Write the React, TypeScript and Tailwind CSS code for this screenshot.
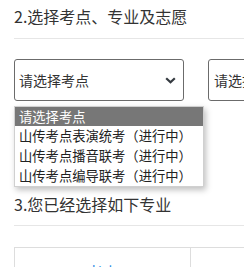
import React from 'react';

const options = ['山传考点表演统考（进行中）', '山传考点播音联考（进行中）', '山传考点编导联考（进行中）'];

function Chevron() {
    return (
        <svg width="11" height="7" viewBox="0 0 11 7" className="shrink-0">
            <path d="M1.2 1.2 L5.5 5.3 L9.8 1.2" fill="none" stroke="#343a40" strokeWidth="2.2" />
        </svg>
    );
}

export default function App() {
    return (
        <div
            className="relative w-[244px] h-[267px] overflow-hidden bg-white pl-[14px] text-[#333]"
            style={{ fontFamily: '"Noto Sans CJK SC", "Noto Sans", sans-serif' }}
        >
            {/* step 2 */}
            <div className="h-[39px] pt-[5px] border-b border-[#e6e6e6]">
                <h2 className="text-[16px] leading-[22px] font-normal whitespace-nowrap">2.选择考点、专业及志愿</h2>
            </div>

            <div className="mt-[20px] flex gap-[24px] w-[400px]">
                <div className="w-[170px] h-[42px] border border-[#6b6b6b] rounded-[3px] flex items-center justify-between pl-[4px] pr-[7px] shrink-0">
                    <span className="text-[14px] leading-[20px]">请选择考点</span>
                    <Chevron />
                </div>
                <div className="w-[170px] h-[42px] border border-[#6b6b6b] rounded-[3px] flex items-center pl-[5px] shrink-0">
                    <span className="text-[14px] leading-[20px]">请选择考点</span>
                </div>
            </div>

            {/* step 3 */}
            <div className="mt-[92px] h-[33px] border-b border-[#e6e6e6]">
                <h2 className="text-[16px] leading-[22px] font-normal whitespace-nowrap">3.您已经选择如下专业</h2>
            </div>

            <div className="mt-[21px] grid grid-cols-[176px_1fr] border-t border-l border-[#dddddd] h-[60px]">
                <div className="border-r border-[#dddddd] flex justify-center pt-[13px]">
                    <span className="text-[16px] leading-[22px] text-[#1e88e5]">考点</span>
                </div>
                <div />
            </div>

            {/* open native dropdown */}
            <div className="absolute left-[14px] top-[106px] w-[190px] bg-white border border-[#d0d0d0] shadow-[2px_3px_6px_rgba(0,0,0,0.25)] text-[13.3px] leading-[20px] text-[#222]">
                <div className="bg-[#777777] text-white pl-[4px] h-[19px] leading-[19px]">请选择考点</div>
                {options.map(o => (
                    <div key={o} className="pl-[4px] h-[20px] whitespace-nowrap">{o}</div>
                ))}
            </div>
        </div>
    );
}
